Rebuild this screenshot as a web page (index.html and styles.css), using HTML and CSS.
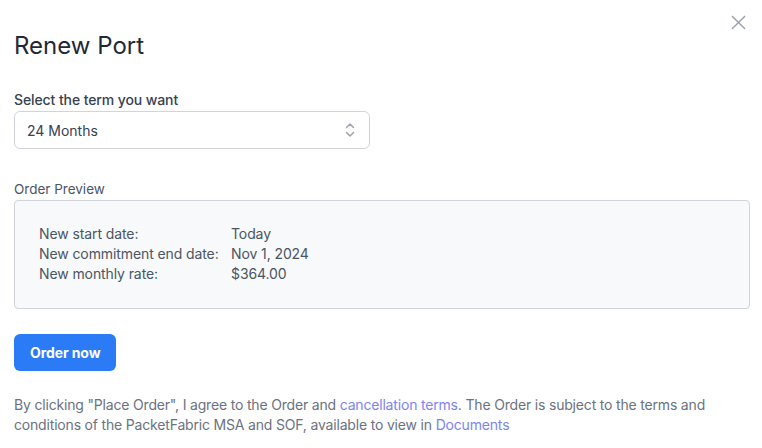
FILE: index.html
```html
<!DOCTYPE html>
<html lang="en">
<head>
<meta charset="utf-8">
<title>Renew Port</title>
<link rel="stylesheet" href="styles.css">
</head>
<body>
<div class="modal">
  <button class="close" aria-label="Close">
    <svg width="16" height="16" viewBox="0 0 16 16"><path d="M1.5 1.5 L14.5 14.5 M14.5 1.5 L1.5 14.5" stroke="#9ca3af" stroke-width="1.6" stroke-linecap="round" fill="none"/></svg>
  </button>
  <h1 class="title">Renew Port</h1>
  <label class="field-label">Select the term you want</label>
  <div class="select">
    <span>24 Months</span>
    <svg class="chev" width="10" height="16" viewBox="0 0 10 16"><path d="M1.5 5.5 L5 2 L8.5 5.5 M1.5 10.5 L5 14 L8.5 10.5" stroke="#9ca3af" stroke-width="1.5" stroke-linecap="round" stroke-linejoin="round" fill="none"/></svg>
  </div>
  <div class="preview-label">Order Preview</div>
  <div class="preview">
    <div class="row"><span class="k">New start date:</span><span class="v">Today</span></div>
    <div class="row"><span class="k">New commitment end date:</span><span class="v">Nov 1, 2024</span></div>
    <div class="row"><span class="k">New monthly rate:</span><span class="v">$364.00</span></div>
  </div>
  <button class="order">Order now</button>
  <p class="terms">By clicking "Place Order", I agree to the Order and <a href="#">cancellation terms</a>. The Order is subject to the terms and<br>conditions of the PacketFabric MSA and SOF, available to view in <a href="#">Documents</a></p>
</div>
</body>
</html>
```
FILE: styles.css
```css
* { box-sizing: border-box; }
html, body { margin: 0; padding: 0; background: #fff; }
body {
  font-family: Inter, "Noto Sans", "Liberation Sans", sans-serif;
  color: #374151;
  width: 762px;
  height: 448px;
  overflow: hidden;
}
.modal {
  position: relative;
  padding: 31px 12px 0 14px;
  display: flex;
  flex-direction: column;
  align-items: flex-start;
}
.close {
  position: absolute;
  top: 15px;
  right: 16px;
  width: 15px;
  height: 15px;
  padding: 0;
  border: 0;
  background: none;
  display: flex;
}
.close svg { width: 15px; height: 15px; }
.title {
  margin: 0;
  font-size: 24px;
  line-height: 30px;
  font-weight: 400;
  color: #1f2937;
}
.field-label {
  margin-top: 30px;
  font-size: 14px;
  line-height: 18px;
  font-weight: 500;
  letter-spacing: -0.1px;
  color: #374151;
}
.select {
  margin-top: 2px;
  width: 356px;
  height: 38px;
  border: 1px solid #d1d5db;
  border-radius: 6px;
  display: flex;
  align-items: center;
  justify-content: space-between;
  padding: 0 14px 0 12px;
  font-size: 14px;
  color: #374151;
}
.chev { display: block; }
.preview-label {
  margin-top: 31px;
  font-size: 13.5px;
  line-height: 18px;
  color: #4b5563;
}
.preview {
  margin-top: 2px;
  width: 736px;
  border: 1px solid #d1d5db;
  border-radius: 4px;
  background: #f8f9fb;
  padding: 23px 24px 24px;
  display: flex;
  flex-direction: column;
}
.row {
  display: grid;
  grid-template-columns: 192px auto;
  font-size: 14px;
  line-height: 20px;
  letter-spacing: -0.1px;
  color: #4b5563;
}
.order {
  margin-top: 25px;
  height: 37px;
  padding: 0 16px;
  border: 0;
  border-radius: 6px;
  background: #2b7bf6;
  color: #fff;
  font-family: inherit;
  font-size: 14px;
  font-weight: 700;
  letter-spacing: -0.1px;
}
.terms {
  margin: 24px 0 0;
  font-size: 14px;
  line-height: 20px;
  letter-spacing: -0.18px;
  color: #6b7280;
  width: 740px;
}
.terms a {
  color: #7c84f6;
  text-decoration: none;
}
```
